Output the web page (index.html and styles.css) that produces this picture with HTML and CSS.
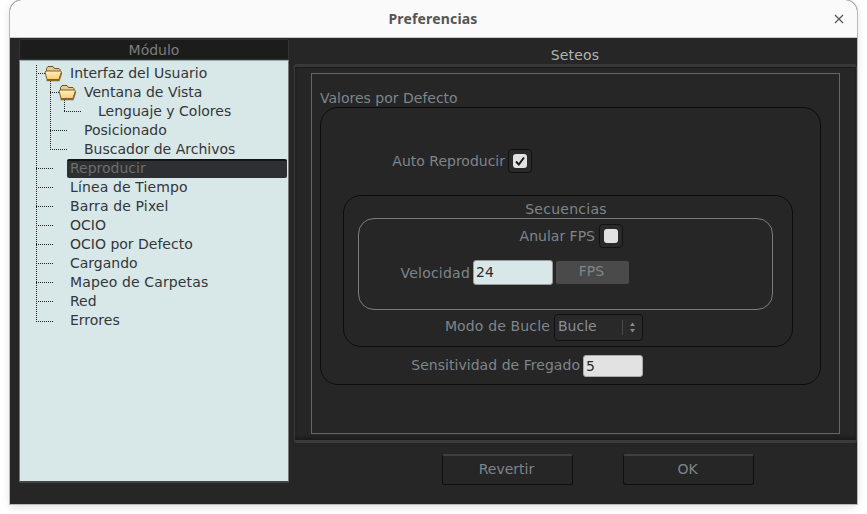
FILE: index.html
```html
<!DOCTYPE html>
<html lang="es">
<head>
<meta charset="utf-8">
<title>Preferencias</title>
<link rel="stylesheet" href="styles.css">
</head>
<body>
<div class="window">
  <header class="titlebar">
    <span class="title">Preferencias</span>
    <svg class="close" width="10" height="10" viewBox="0 0 10 10"><path d="M1 1l8 8M9 1l-8 8" stroke="#555" stroke-width="1.2" fill="none"/></svg>
  </header>
  <div class="content">
    <aside class="left">
      <div class="mod-head">Módulo</div>
      <div class="tree">
        <svg class="tree-lines" width="100" height="280" viewBox="0 0 100 280">
          <defs>
            <linearGradient id="flap" x1="0" y1="0" x2="0" y2="1">
              <stop offset="0" stop-color="#fff0c4"/>
              <stop offset="1" stop-color="#ffcb68"/>
            </linearGradient>
            <g id="folder">
              <path d="M26.500 7.500l1.500-2h5l1.500 2h4.500l1 1v2h-13.500z" fill="#e8c98a" stroke="#6b5326"/>
              <path d="M27 18.500l-2-7.500 1-1h14.500l1 1-2.500 7.500z" fill="url(#flap)" stroke="#7a6030"/>
              <path d="M26.500 19.500h12.500l2.500-7.500" stroke="#8a6a2c" fill="none" stroke-width="1.500"/>
            </g>
          </defs>
          <g stroke="#222" stroke-width="1" stroke-dasharray="1 1" fill="none">
            <path d="M16.500 4V261M16 12.500H26M30.500 20V90M30 31.500H40M44.500 39V51M44 50.500H62M30 69.500H48M30 88.500H48M16 107.500H34M16 126.500H34M16 145.500H34M16 164.500H34M16 183.500H34M16 202.500H34M16 221.500H34M16 240.500H34M16 260.500H34"/>
          </g>
          <use href="#folder"/>
          <use href="#folder" x="14" y="19"/>
        </svg>
        <div class="row l1">Interfaz del Usuario</div>
        <div class="row l2">Ventana de Vista</div>
        <div class="row l3">Lenguaje y Colores</div>
        <div class="row l2">Posicionado</div>
        <div class="row l2">Buscador de Archivos</div>
        <div class="row l1 selected">Reproducir</div>
        <div class="row l1 wide">Línea de Tiempo</div>
        <div class="row l1 wide">Barra de Pixel</div>
        <div class="row l1">OCIO</div>
        <div class="row l1">OCIO por Defecto</div>
        <div class="row l1">Cargando</div>
        <div class="row l1 wide">Mapeo de Carpetas</div>
        <div class="row l1">Red</div>
        <div class="row l1">Errores</div>
      </div>
    </aside>
    <main class="right">
      <div class="set-head">Seteos</div>
      <div class="frame">
        <section class="inner">
          <div class="legend">Valores por Defecto</div>
          <div class="group-main">
            <div class="field auto-row">
              <span class="lbl">Auto Reproducir</span>
              <span class="check"><span class="box"><svg width="12" height="12" viewBox="0 0 12 12"><path d="M2 6.500l2.800 3L10 2.500" stroke="#1a1a1a" stroke-width="2" fill="none"/></svg></span></span>
            </div>
            <div class="group-seq">
              <div class="seq-title">Secuencias</div>
              <div class="group-fps">
                <div class="field fps-row">
                  <span class="lbl">Anular FPS</span>
                  <span class="check"><span class="box"></span></span>
                </div>
                <div class="field speed-row">
                  <span class="lbl">Velocidad</span>
                  <span class="input speed">24</span>
                  <span class="fps-btn">FPS</span>
                </div>
              </div>
              <div class="field loop-row">
                <span class="lbl">Modo de Bucle</span>
                <span class="select">Bucle
                  <span class="sel-arrows"><svg width="7" height="11" viewBox="0 0 7 11"><path d="M3.500 0.500L6 4H1zM3.500 10.500L1 7h5z" fill="#8a8a8a"/></svg></span>
                </span>
              </div>
            </div>
            <div class="field scrub-row">
              <span class="lbl">Sensitividad de Fregado</span>
              <span class="input scrub">5</span>
            </div>
          </div>
        </section>
      </div>
      <footer class="actions">
        <button class="btn">Revertir</button>
        <button class="btn">OK</button>
      </footer>
    </main>
  </div>
</div>
</body>
</html>
```
FILE: styles.css
```css
* { box-sizing: border-box; }
html, body { margin: 0; padding: 0; background: #fff; }
body { width: 867px; height: 514px; overflow: hidden; font-family: "DejaVu Sans", sans-serif; font-size: 14px; }
.window {
  margin-left: 10px; width: 847px; height: 504px;
  border-radius: 12px 12px 0 0; overflow: hidden;
  display: flex; flex-direction: column; background: #262626;
  box-shadow: 0 0 0 1px #b8b8b8, 0 3px 10px rgba(0,0,0,.12);
}
.titlebar {
  height: 38px; flex: none; background: #fafafa; border-bottom: 1px solid #c8c8c8;
  display: flex; align-items: center; justify-content: center; position: relative;
}
.title { font-family: "Noto Sans", sans-serif; font-weight: 700; font-size: 14px; letter-spacing: .17px; color: #555; margin-left: -1px; }
.close { position: absolute; right: 13px; top: 14px; }
.content { flex: 1; display: flex; min-height: 0; }
.left { width: 284px; flex: none; padding: 1px 0 0 9px; display: flex; flex-direction: column; }
.mod-head {
  width: 270px; height: 21px; flex: none; background: #1c1c1c; border: 1px solid #333; border-radius: 2px 2px 0 0;
  color: #7c7c7c; text-align: center; line-height: 20px; font-size: 14px;
}
.tree {
  position: relative; width: 270px; height: 423px; flex: none; background: #d8e7e7;
  border: 1px solid #777; border-top: 1px solid #9aa; border-bottom: 2px solid #444; border-radius: 0 0 2px 2px;
  padding: 3px 0 0 0; color: #33363a;
}
.tree-lines { position: absolute; left: 0; top: 0; }
.row { height: 19px; line-height: 18px; white-space: nowrap; position: relative; }
.l1 { padding-left: 50px; }
.l2 { padding-left: 64px; }
.l3 { padding-left: 78px; }
.wide { letter-spacing: .13px; }
.selected {
  margin-left: 47px; padding-left: 3px; margin-right: 1px; background: #2c3032; border-top: 2px solid #141414;
  border-radius: 2px; color: #6e6e6e; line-height: 15px;
}
.right { flex: 1; display: flex; flex-direction: column; min-width: 0; }
.set-head { height: 26px; flex: none; text-align: center; line-height: 35px; color: #b4b4b4; letter-spacing: .2px; margin-left: -1px; }
.frame {
  height: 379px; flex: none; border: 1px solid #3a3a3a; border-top: 3px solid #383838; border-bottom: 3px solid #3a3a3a;
  border-radius: 3px; width: 563px; background: #262626; padding: 6px 16px;
  box-shadow: inset 0 1px 0 #1a1a1a, inset 0 -3px 3px #1c1c1c;
}
.inner { height: 361px; border: 1px solid #666; padding: 15px 18px 0 8px; }
.legend { color: #7f858c; height: 18px; line-height: 18px; }
.group-main {
  height: 278px; border: 1px solid #0c0c0c; border-radius: 18px; padding: 0 27px 0 22px; display: flex; flex-direction: column;
}
.field { display: flex; align-items: center; justify-content: flex-end; }
.lbl { color: #7f858c; white-space: nowrap; }
.auto-row { height: 24px; margin-top: 41px; padding-right: 261px; margin-bottom: 22px; }
.auto-row .lbl { position: relative; left: 1px; }
.check {
  width: 24px; height: 24px; margin-left: 4px; border: 1px solid #111; border-radius: 4px; background: #2a2a2a;
  display: flex; align-items: center; justify-content: center; flex: none;
}
.box { width: 14px; height: 14px; background: #e3e3e3; border-radius: 3px; display: flex; align-items: center; justify-content: center; }
.group-seq {
  width: 450px; height: 152px; border: 1px solid #0c0c0c; border-radius: 18px; padding: 0 19px 0 14px; display: flex; flex-direction: column; flex: none;
}
.seq-title { height: 22px; line-height: 26px; text-align: center; color: #7f858c; letter-spacing: .25px; margin-left: 1px; }
.group-fps { height: 92px; flex: none; border: 1px solid #7c7c7c; border-radius: 16px; display: flex; flex-direction: column; }
.fps-row { height: 24px; margin-top: 5px; padding-right: 149px; }
.speed-row { height: 25px; margin-top: 12px; padding-right: 143px; }
.speed-row .lbl { margin-right: 3px; letter-spacing: .22px; }
.input { display: block; height: 25px; line-height: 23px; border-radius: 3px; padding-left: 2px; color: #2a2a2a; border: 1px solid #999; flex: none; }
.speed { width: 80px; background: #d8e7e7; }
.fps-btn {
  width: 73px; height: 23px; margin-left: 3px; background: #4a4a4a; color: #7f858c; text-align: center; line-height: 21px; padding-right: 2px; border-radius: 2px; flex: none;
}
.loop-row { height: 27px; margin-top: 4px; padding-right: 130px; }
.loop-row .lbl { padding-bottom: 4px; letter-spacing: .15px; }
.select {
  width: 89px; height: 27px; margin-left: 4px; border: 1px solid #111; border-radius: 4px; background: #292929; color: #8a8f96;
  line-height: 22px; padding-left: 3px; position: relative; display: block; flex: none;
}
.sel-arrows { position: absolute; right: 0; top: 5px; height: 15px; width: 20px; border-left: 1px solid #4a4a4a; display: flex; align-items: center; justify-content: center; }
.scrub-row { height: 22px; margin-top: 8px; width: 300px; }
.scrub-row .lbl { margin-right: 3px; padding-bottom: 3px; letter-spacing: .04px; }
.scrub { width: 60px; height: 22px; line-height: 20px; background: #e2e2e2; border-color: #aaa; }
.actions { flex: 1; display: flex; align-items: flex-start; padding: 11px 0 0 148px; gap: 50px; }
.btn {
  width: 131px; height: 31px; background: #262626; border: 1px solid #0f0f0f; border-top: 2px solid #3f3f3f; border-radius: 3px;
  color: #7f858c; font: 14px "DejaVu Sans", sans-serif; padding: 0 2px 3px 0;
}
```
